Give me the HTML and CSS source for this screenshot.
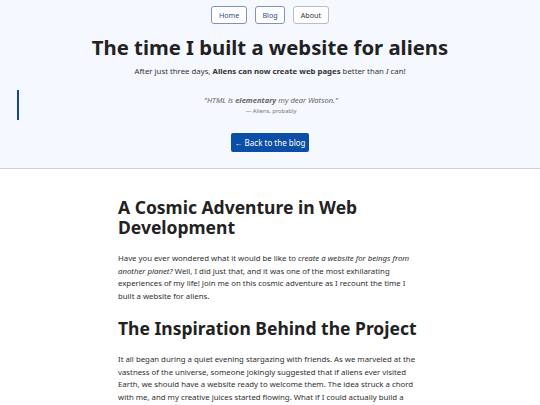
FILE: index.html
```html
<!DOCTYPE html>
<html>
<head>
<meta charset="utf-8">
<link rel="stylesheet" href="styles.css">
</head>
<body>
<header class="hero">
  <nav class="nav">
    <a class="nav-btn">Home</a>
    <a class="nav-btn">Blog</a>
    <a class="nav-btn nav-btn-muted">About</a>
  </nav>
  <h1 class="title">The time I built a website for aliens</h1>
  <p class="subtitle">After just three days, <strong>Aliens can now create web pages</strong> better than <em>I</em> can!</p>
  <blockquote class="quote">
    <p class="quote-text">"HTML is <strong>elementary</strong> my dear Watson."</p>
    <p class="quote-by">— Aliens, probably</p>
  </blockquote>
  <div class="back-wrap"><a class="back-btn">← Back to the blog</a></div>
</header>
<main class="article">
  <h2 class="heading">A Cosmic Adventure in Web Development</h2>
  <p class="para">Have you ever wondered what it would be like to <em>create a website for beings from another planet?</em> Well, I did just that, and it was one of the most exhilarating experiences of my life! Join me on this cosmic adventure as I recount the time I built a website for aliens.</p>
  <h2 class="heading">The Inspiration Behind the Project</h2>
  <p class="para">It all began during a quiet evening stargazing with friends. As we marveled at the vastness of the universe, someone jokingly suggested that if aliens ever visited Earth, we should have a website ready to welcome them. The idea struck a chord with me, and my creative juices started flowing. What if I could actually build a website for aliens?</p>
</main>
</body>
</html>
```
FILE: styles.css
```css
* { box-sizing: border-box; }
html, body { margin: 0; padding: 0; }
body {
  font-family: "Noto Sans", sans-serif;
  color: #222;
  background: #fff;
}
.hero {
  background: #f5f8ff;
  border-bottom: 1.5px solid #cfcfd6;
  padding: 6px 0 16px;
  text-align: center;
}
.nav {
  display: flex;
  justify-content: center;
  gap: 8px;
}
.nav-btn {
  display: inline-block;
  font-size: 7.2px;
  line-height: 16px;
  padding: 0 6.5px;
  border: 1px solid #7f93c0;
  border-radius: 3px;
  background: #fff;
  color: #2e4a86;
}
.nav-btn-muted {
  border-color: #b9bccb;
  color: #333;
}
.title {
  font-size: 20.3px;
  font-weight: 700;
  margin: 9px 0 0;
  line-height: 28px;
  color: #222;
}
.subtitle {
  font-size: 7.8px;
  margin: 4px 0 0;
  color: #333;
  line-height: 12px;
}
.quote {
  margin: 13px 0 0 17px;
  padding: 4px 17px 4px 0;
  border-left: 2px solid #0f4a92;
}
.quote-text {
  margin: 0;
  font-style: italic;
  font-size: 7.6px;
  color: #666;
  line-height: 12px;
}
.quote-by {
  margin: 0;
  font-size: 5.8px;
  color: #777;
  line-height: 10px;
}
.back-wrap {
  margin-top: 13px;
  display: flex;
  justify-content: center;
}
.back-btn {
  display: block;
  background: #0b4ea8;
  color: #fff;
  font-size: 8px;
  line-height: 19px;
  padding: 0 4px;
  border-radius: 2px;
}
.article {
  width: 304px;
  margin: 0 auto;
  padding-top: 20px;
}
.heading {
  font-size: 17.5px;
  line-height: 20px;
  font-weight: 700;
  margin: 8px 0 15px;
  color: #222;
}
.para {
  font-size: 7.8px;
  line-height: 12.7px;
  color: #2e2e2e;
  margin: 0 0 15px;
}
```
